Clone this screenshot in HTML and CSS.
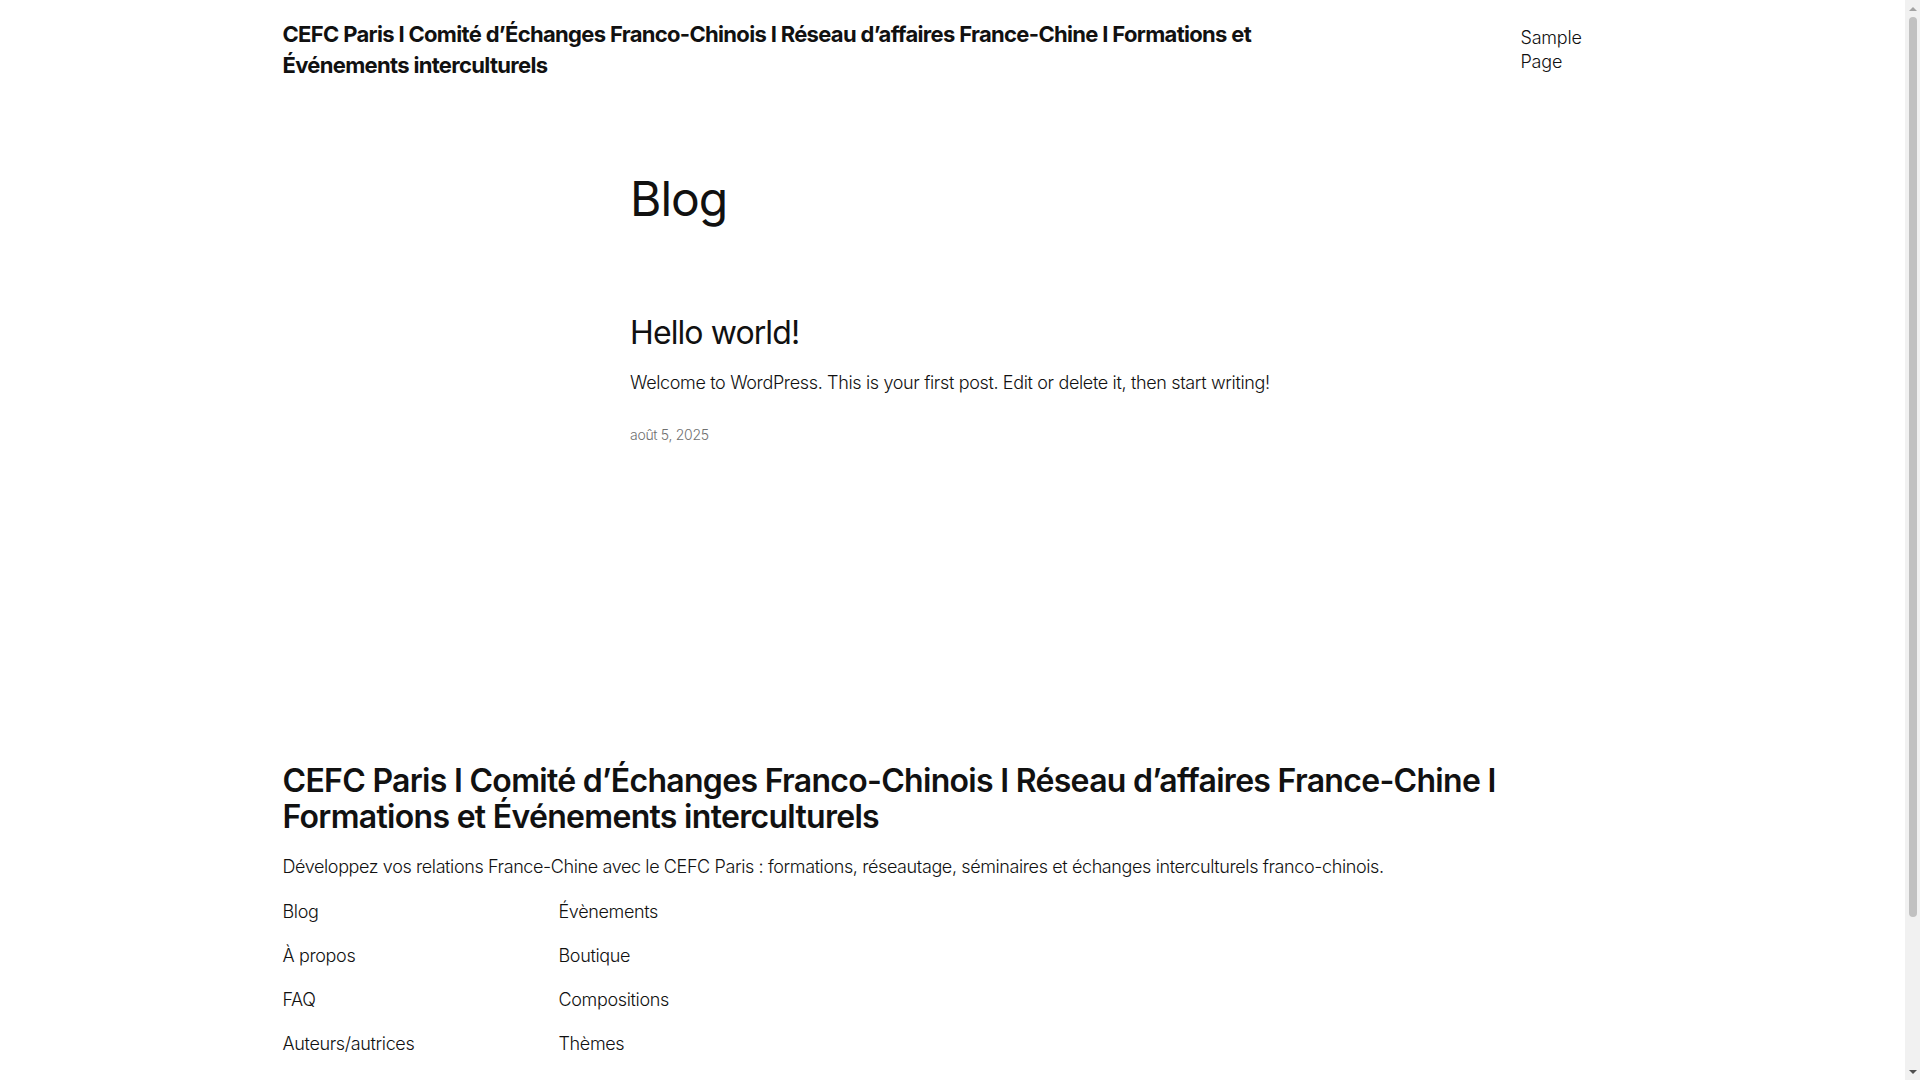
FILE: index.html
```html
<!DOCTYPE html>
<html lang="fr">
<head>
<meta charset="utf-8">
<title>Blog – CEFC Paris</title>
<link rel="stylesheet" href="styles.css">
</head>
<body>
<header class="site-header">
  <div class="wide header-row">
    <p class="site-title"><a href="#">CEFC Paris I Comité d’Échanges Franco-Chinois I Réseau d’affaires France-Chine I Formations et Événements interculturels</a></p>
    <nav class="header-nav"><a href="#">Sample Page</a></nav>
  </div>
</header>

<main class="site-main">
  <div class="content">
    <h1 class="page-title">Blog</h1>
    <article class="post">
      <h2 class="post-title"><a href="#">Hello world!</a></h2>
      <p class="post-excerpt">Welcome to WordPress. This is your first post. Edit or delete it, then start writing!</p>
      <p class="post-date">août 5, 2025</p>
    </article>
  </div>
</main>

<footer class="site-footer">
  <div class="wide">
    <h2 class="footer-title"><a href="#">CEFC Paris I Comité d’Échanges Franco-Chinois I Réseau d’affaires France-Chine I Formations et Événements interculturels</a></h2>
    <p class="tagline">Développez vos relations France-Chine avec le CEFC Paris : formations, réseautage, séminaires et échanges interculturels franco-chinois.</p>
    <div class="footer-navs">
      <ul class="footer-nav">
        <li><a href="#">Blog</a></li>
        <li><a href="#">À propos</a></li>
        <li><a href="#">FAQ</a></li>
        <li><a href="#">Auteurs/autrices</a></li>
      </ul>
      <ul class="footer-nav">
        <li><a href="#">Évènements</a></li>
        <li><a href="#">Boutique</a></li>
        <li><a href="#">Compositions</a></li>
        <li><a href="#">Thèmes</a></li>
      </ul>
    </div>
  </div>
</footer>

<div class="scrollbar" aria-hidden="true">
  <span class="sb-arrow sb-up"></span>
  <span class="sb-thumb"></span>
  <span class="sb-arrow sb-down"></span>
</div>
</body>
</html>
```

FILE: styles.css
```css
* { box-sizing: border-box; }

html, body {
  margin: 0;
  padding: 0;
  background: #ffffff;
}

body {
  padding-right: 15px;
  font-family: "Inter", "Liberation Sans", sans-serif;
  font-weight: 300;
  color: #111111;
  font-size: 18px;
  line-height: 1.4;
  letter-spacing: -0.35px;
}

a {
  color: inherit;
  text-decoration: none;
}

p, h1, h2, ul {
  margin: 0;
}

.wide {
  max-width: 1340px;
  margin: 0 auto;
}

/* Header */
.site-header {
  padding: 19px 0;
}

.header-row {
  display: flex;
  justify-content: space-between;
  align-items: center;
}

.site-title {
  max-width: 1010px;
  font-size: 22px;
  font-weight: 700;
  line-height: 31px;
  letter-spacing: -0.68px;
}

.header-nav {
  width: 102px;
  font-size: 18px;
  line-height: 24.5px;
  font-weight: 300;
  letter-spacing: -0.2px;
}

.header-nav a {
  display: block;
  width: 70px;
}

/* Main */
.content {
  max-width: 645px;
  margin: 0 auto;
}

.page-title {
  margin-top: 70px;
  font-size: 48px;
  font-weight: 400;
  line-height: 1.2;
  letter-spacing: -1px;
}

.post {
  margin-top: 86px;
}

.post-title {
  font-size: 32px;
  font-weight: 400;
  line-height: 1.2;
  letter-spacing: -0.9px;
}

.post-excerpt {
  margin-top: 18px;
  font-size: 18px;
  line-height: 1.4;
}

.post-date {
  margin-top: 30px;
  font-size: 14px;
  letter-spacing: -0.3px;
  color: #707070;
}

/* Footer */
.site-footer {
  margin-top: 318px;
  padding-bottom: 60px;
}

.footer-title {
  font-size: 32px;
  font-weight: 600;
  line-height: 36px;
  letter-spacing: -0.7px;
}

.tagline {
  margin-top: 19px;
  font-size: 18px;
  letter-spacing: -0.39px;
}

.footer-navs {
  margin-top: 20px;
  display: grid;
  grid-template-columns: 276px 276px;
}

.footer-nav {
  list-style: none;
  padding: 0;
  display: flex;
  flex-direction: column;
  gap: 19px;
}

.footer-nav li {
  font-size: 18px;
  line-height: 25px;
}

/* Imitation of the browser's vertical scrollbar */
.scrollbar {
  position: fixed;
  top: 0;
  right: 0;
  width: 15px;
  height: 100vh;
  background: #f1f1f1;
  display: flex;
  flex-direction: column;
  align-items: center;
}

.sb-arrow {
  width: 15px;
  height: 17px;
  display: flex;
  align-items: center;
  justify-content: center;
}

.sb-arrow::before {
  content: "";
  width: 0;
  height: 0;
  border-left: 4px solid transparent;
  border-right: 4px solid transparent;
}

.sb-up::before {
  border-bottom: 4px solid #a3a3a3;
}

.sb-down::before {
  border-top: 4px solid #505050;
}

.sb-thumb {
  flex: 0 0 auto;
  width: 8px;
  height: 900px;
  border-radius: 4px;
  background: #c1c1c1;
  margin-bottom: auto;
}
```
